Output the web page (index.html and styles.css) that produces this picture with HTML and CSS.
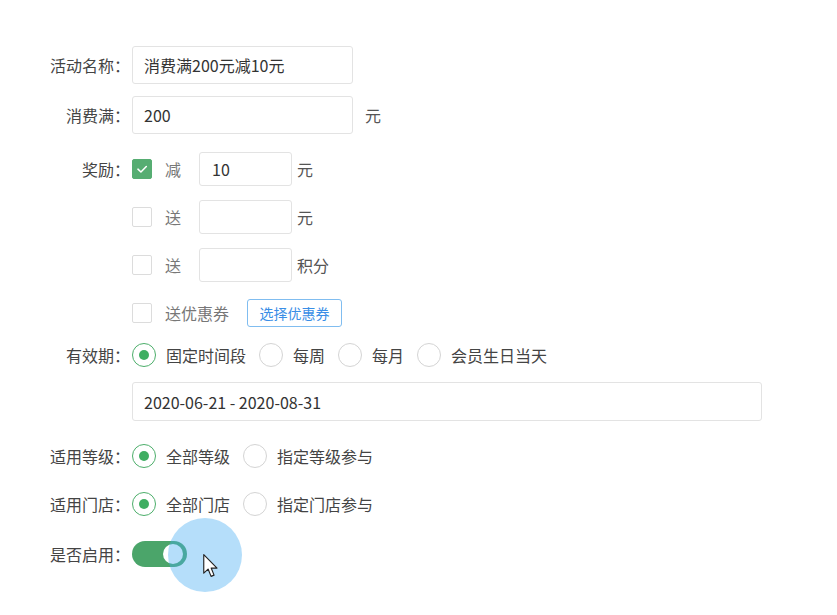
FILE: index.html
```html
<!DOCTYPE html>
<html lang="zh-CN">
<head>
<meta charset="utf-8">
<title>满减活动设置</title>
<link rel="stylesheet" href="styles.css">
</head>
<body>
<div class="page">
  <main class="form">
    <div class="item">
      <span class="label">活动名称：</span>
      <input class="field field-lg" type="text" value="消费满200元减10元" readonly>
    </div>

    <div class="item item-amount">
      <span class="label">消费满：</span>
      <input class="field field-lg" type="text" value="200" readonly>
      <span class="unit unit-wide">元</span>
    </div>

    <div class="item item-reward">
      <span class="label">奖励：</span>
      <div class="options">
        <div class="opt-row">
          <span class="check is-on">
            <svg viewBox="0 0 20 20" width="20" height="20"><path d="M5.5 10.2 L8.8 13.3 L14.8 7.2" fill="none" stroke="#fff" stroke-width="1.7" stroke-linecap="round" stroke-linejoin="round"/></svg>
          </span>
          <span class="opt-text">减</span>
          <input class="field field-sm" type="text" value="10" readonly>
          <span class="unit">元</span>
        </div>
        <div class="opt-row">
          <span class="check"></span>
          <span class="opt-text">送</span>
          <input class="field field-sm" type="text" value="" readonly>
          <span class="unit">元</span>
        </div>
        <div class="opt-row">
          <span class="check"></span>
          <span class="opt-text">送</span>
          <input class="field field-sm" type="text" value="" readonly>
          <span class="unit">积分</span>
        </div>
        <div class="opt-row">
          <span class="check"></span>
          <span class="opt-text">送优惠券</span>
          <button class="btn-outline" type="button">选择优惠券</button>
        </div>
      </div>
    </div>

    <div class="item item-validity">
      <span class="label">有效期：</span>
      <div class="radio-group">
        <span class="radio is-on"></span><span class="radio-text">固定时间段</span>
        <span class="radio"></span><span class="radio-text">每周</span>
        <span class="radio"></span><span class="radio-text">每月</span>
        <span class="radio"></span><span class="radio-text">会员生日当天</span>
      </div>
    </div>

    <div class="item item-date">
      <span class="label"></span>
      <input class="field field-xl" type="text" value="2020-06-21 - 2020-08-31" readonly>
    </div>

    <div class="item item-level">
      <span class="label">适用等级：</span>
      <div class="radio-group">
        <span class="radio is-on"></span><span class="radio-text">全部等级</span>
        <span class="radio"></span><span class="radio-text">指定等级参与</span>
      </div>
    </div>

    <div class="item item-store">
      <span class="label">适用门店：</span>
      <div class="radio-group">
        <span class="radio is-on"></span><span class="radio-text">全部门店</span>
        <span class="radio"></span><span class="radio-text">指定门店参与</span>
      </div>
    </div>

    <div class="item item-enable">
      <span class="label">是否启用：</span>
      <span class="switch is-on"><span class="switch-knob"></span></span>
    </div>
  </main>

  <!-- click highlight and pointer drawn over the switch -->
  <div class="click-ripple"></div>
  <svg class="cursor" viewBox="0 0 13 21" width="15" height="24">
    <path d="M0.6 0.6 L0.6 16.8 L4.4 13.2 L7 19.6 L9.6 18.5 L7.1 12.3 L12.2 12.3 Z" fill="#fff" stroke="#222" stroke-width="1" stroke-linejoin="round"/>
  </svg>
</div>
</body>
</html>
```

FILE: styles.css
```css
body {
  margin: 0;
  background: #fff;
  font-family: "Noto Sans CJK SC", "Microsoft YaHei", sans-serif;
  color: #333;
}

.page {
  position: relative;
  width: 837px;
  height: 615px;
  overflow: hidden;
}

.form {
  display: flex;
  flex-direction: column;
  padding-top: 46px;
}

.item {
  display: flex;
  align-items: center;
}

.label {
  flex: none;
  width: 130px;
  margin-right: 2px;
  text-align: right;
  font-size: 16px;
  color: #444;
}

.item-amount { margin-top: 12px; }
.item-reward { margin-top: 18px; align-items: flex-start; }
.item-reward .label { line-height: 34px; }
.item-validity { margin-top: 13px; height: 24px; }
.item-date { margin-top: 15px; }
.item-level { margin-top: 23px; height: 24px; }
.item-store { margin-top: 24px; height: 24px; }
.item-enable { margin-top: 25px; height: 26px; }

/* text inputs */
.field {
  box-sizing: border-box;
  border: 1px solid #e3e3e3;
  border-radius: 3px;
  background: #fff;
  font: 16px "Noto Sans CJK SC", "Microsoft YaHei", sans-serif;
  color: #333;
  padding: 0 11px;
  outline: none;
}
.field-lg { width: 221px; height: 38px; }
.field-sm { width: 93px; height: 34px; padding: 0 12px; }
.field-xl { width: 630px; height: 39px; }

.unit {
  margin-left: 5px;
  font-size: 16px;
  color: #555;
}
.unit-wide { margin-left: 12px; }

/* reward options */
.options {
  display: flex;
  flex-direction: column;
  gap: 14px;
}

.opt-row {
  display: flex;
  align-items: center;
  height: 34px;
}

.check {
  flex: none;
  box-sizing: border-box;
  width: 20px;
  height: 20px;
  margin-right: 13px;
  border: 1px solid #dcdcdc;
  border-radius: 2px;
  background: #fff;
  display: flex;
  align-items: center;
  justify-content: center;
}
.check svg { display: block; }
.check.is-on {
  background: #56ad72;
  border-color: #56ad72;
}

.opt-text {
  min-width: 16px;
  margin-right: 18px;
  font-size: 16px;
  color: #777;
}

.btn-outline {
  box-sizing: border-box;
  width: 95px;
  height: 28px;
  padding: 0;
  border: 1px solid #80bdf0;
  border-radius: 3px;
  background: #fff;
  color: #3a8ee6;
  font: 14px "Noto Sans CJK SC", "Microsoft YaHei", sans-serif;
}

/* radios */
.radio-group {
  display: flex;
  align-items: center;
}

.radio {
  flex: none;
  box-sizing: border-box;
  width: 24px;
  height: 24px;
  margin-right: 10px;
  border: 1.5px solid #d4d4d4;
  border-radius: 50%;
  display: flex;
  align-items: center;
  justify-content: center;
}
.radio.is-on { border-color: #4cae6a; }
.radio.is-on::after {
  content: "";
  width: 10px;
  height: 10px;
  border-radius: 50%;
  background: #3fae62;
}

.radio-text {
  margin-right: 13px;
  font-size: 16px;
  color: #444;
}

/* switch */
.switch {
  position: relative;
  flex: none;
  width: 55px;
  height: 26px;
  border-radius: 13px;
  background: #cfcfcf;
}
.switch.is-on { background: #4ba56a; }
.switch-knob {
  position: absolute;
  top: 3px;
  right: 4px;
  width: 20px;
  height: 20px;
  border-radius: 50%;
  background: #fff;
}

.click-ripple {
  position: absolute;
  left: 168px;
  top: 518px;
  width: 74px;
  height: 74px;
  border-radius: 50%;
  background: rgba(70, 172, 242, 0.4);
}

.cursor {
  position: absolute;
  left: 203px;
  top: 554px;
}
```
